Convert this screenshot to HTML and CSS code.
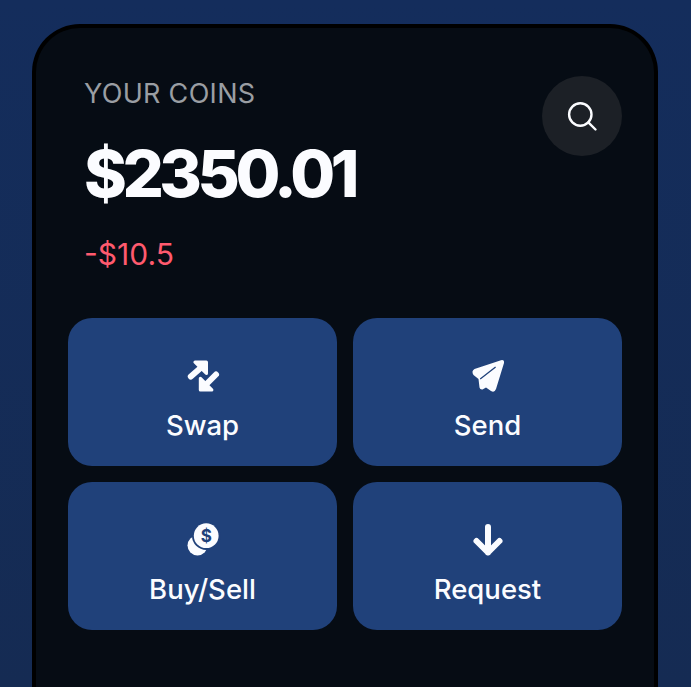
FILE: index.html
```html
<!DOCTYPE html>
<html lang="en">
<head>
    <meta charset="UTF-8">
    <meta name="viewport" content="width=device-width, initial-scale=1.0">
    <title>Your Coins</title>
    <link rel="stylesheet" href="styles.css">
</head>
<body>
    <main class="phone">
        <section class="balance">
            <div class="balance-text">
                <p class="balance-label">YOUR COINS</p>
                <h1 class="balance-total">$2350.01</h1>
                <p class="balance-change">-$10.5</p>
            </div>
            <button class="search-btn" type="button" aria-label="Search">
                <svg width="32" height="32" viewBox="0 0 32 32" fill="none" stroke="#fbfcff" stroke-width="2.4" stroke-linecap="round">
                    <circle cx="14.3" cy="14.5" r="11.2"/>
                    <path d="M22.3 22.3 L29.5 29.5"/>
                </svg>
            </button>
        </section>

        <section class="actions">
            <button class="action" type="button">
                <svg class="action-icon" viewBox="0 0 36 36" fill="#fbfcff" stroke="#fbfcff" stroke-linejoin="round" stroke-linecap="round">
                    <path d="M10 4.2 H21.4 V15.4 Z" stroke-width="3.2"/>
                    <path d="M15 10.5 L5.8 18.5" stroke-width="6"/>
                    <path d="M15.4 20.5 V32 H26.8 Z" stroke-width="3.2"/>
                    <path d="M21 26.5 L31 16.5" stroke-width="6"/>
                </svg>
                <span>Swap</span>
            </button>
            <button class="action" type="button">
                <svg class="action-icon" viewBox="0 0 36 36" fill="#fbfcff">
                    <path fill-rule="evenodd" d="M4.5 11 L31 2.2 Q34.5 1.5 34 5 L26 31 Q24.5 35 21 33 L16 29.5 L12.5 31.5 Q10 31.8 9.5 29.5 L8.5 21 L3.5 17 Q1 13 4.5 11 Z M9.8 20.6 L10.6 21.6 L26 9.4 L25.2 8.6 Z"/>
                </svg>
                <span>Send</span>
            </button>
            <button class="action" type="button">
                <svg class="action-icon" viewBox="0 0 36 36">
                    <circle cx="12.5" cy="23.5" r="10" fill="#fbfcff"/>
                    <circle cx="21.2" cy="13.7" r="14.2" fill="#20417a"/>
                    <circle cx="21.2" cy="13.7" r="12.4" fill="#fbfcff"/>
                    <text x="21.2" y="19.8" class="coin-mark">$</text>
                </svg>
                <span>Buy/Sell</span>
            </button>
            <button class="action" type="button">
                <svg class="action-icon" viewBox="0 0 36 36" fill="none" stroke="#fbfcff" stroke-width="6" stroke-linecap="round" stroke-linejoin="round">
                    <path d="M18 5 V30.5 M6.5 19 L18 30.5 L29.5 19"/>
                </svg>
                <span>Request</span>
            </button>
        </section>
    </main>
</body>
</html>
```

FILE: styles.css
```css
html, body {
    margin: 0;
    height: 100%;
}
body {
    font-family: Inter, "Noto Sans", sans-serif;
    background: linear-gradient(#142d5c, #152b53);
    padding: 24px 33px 0 32px;
    box-sizing: border-box;
    overflow: hidden;
}
.phone {
    background-color: #060c14;
    border: 4px solid #000;
    border-bottom: 0;
    border-radius: 48px 48px 0 0;
    padding: 48px 32px 0;
    height: 663px;
    box-sizing: border-box;
}
.balance {
    display: flex;
    justify-content: space-between;
    align-items: flex-start;
    padding-left: 16px;
}
.balance-label {
    margin: 0;
    font-size: 27px;
    line-height: 36px;
    letter-spacing: 0.3px;
    color: #9a9ea3;
}
.balance-total {
    margin: 26px 0 0;
    font-size: 65px;
    line-height: 72px;
    font-weight: 800;
    letter-spacing: -4.5px;
    color: #fbfcff;
}
.balance-change {
    margin: 22px 0 0;
    font-size: 30px;
    line-height: 44px;
    color: #ff5a6e;
}
.search-btn {
    width: 80px;
    height: 80px;
    border: 0;
    border-radius: 50%;
    background-color: #1c2026;
    display: flex;
    align-items: center;
    justify-content: center;
    padding: 0;
}
.actions {
    display: grid;
    grid-template-columns: 1fr 1fr;
    gap: 16px;
    margin-top: 42px;
}
.action {
    height: 148px;
    border: 0;
    border-radius: 24px;
    background-color: #20417a;
    color: #fbfcff;
    font-family: inherit;
    font-size: 27.5px;
    font-weight: 500;
    display: flex;
    flex-direction: column;
    align-items: center;
    justify-content: flex-start;
    padding: 40px 0 0;
}
.action-icon {
    width: 36px;
    height: 36px;
    margin-bottom: 14px;
}
.coin-mark {
    font-family: Inter, sans-serif;
    font-size: 17px;
    font-weight: 700;
    text-anchor: middle;
    fill: #20417a;
}
```
